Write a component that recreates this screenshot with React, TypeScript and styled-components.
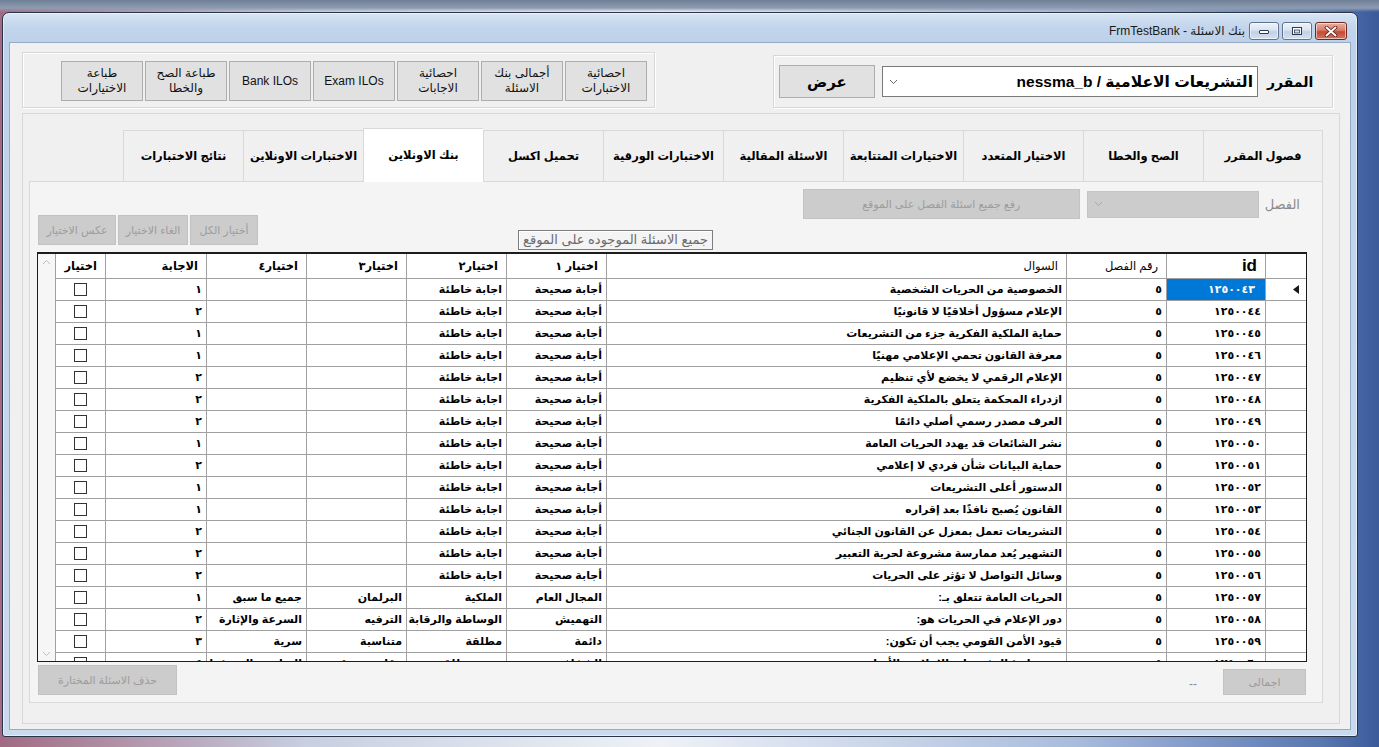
import React from "react";
import styled, { createGlobalStyle } from "styled-components";

const GlobalStyle = createGlobalStyle`
  html, body { margin: 0; padding: 0; }
  body {
    width: 1379px; height: 747px; overflow: hidden;
    font-family: "Liberation Sans", "DejaVu Sans", sans-serif;
    color: #000;
  }
  #root { width: 1379px; height: 747px; }
`;

const FONT = `"Liberation Sans", "DejaVu Sans", sans-serif`;

const Desktop = styled.div`
  width: 1379px;
  height: 747px;
  box-sizing: border-box;
  padding: 12px 21px 10px 2px;
  display: flex;
  background:
    linear-gradient(180deg, #6f7f96 0px, #8e9cb1 8px, rgba(0,0,0,0) 12px),
    linear-gradient(90deg, #a26a84 0%, #c7cfe0 22%, #eef1f7 48%, #a9bcdc 78%, #5876b0 96%, #3a5a9a 100%);
`;

const Window = styled.div`
  flex: 1;
  display: flex;
  flex-direction: column;
  border: 1px solid #2b3444;
  border-radius: 7px 7px 3px 3px;
  padding: 0 6px 6px 6px;
  background: linear-gradient(180deg, #d8e5f4 0px, #c2d5ec 14px, #bdd1ea 30px, #c9daee 100%);
  box-shadow: inset 0 0 0 1px rgba(255, 255, 255, 0.55);
`;

const TitleBar = styled.div`
  height: 29px;
  box-sizing: border-box;
  display: flex;
  justify-content: flex-end;
  align-items: flex-start;
  padding: 9px 4px 0 0;
  flex-shrink: 0;
`;

const TitleText = styled.div`
  font: 12px ${FONT};
  color: #1a1a1a;
  line-height: 18px;
  margin-right: 4px;
  white-space: nowrap;
`;

const CaptionGroup = styled.div`
  display: flex;
  gap: 3px;
`;

const CaptionBtn = styled.div<{ $close?: boolean }>`
  width: ${(p) => (p.$close ? 32 : 30)}px;
  height: 18px;
  box-sizing: border-box;
  border: 1px solid ${(p) => (p.$close ? "#6e2a22" : "#61748f")};
  border-radius: 3px;
  display: flex;
  align-items: center;
  justify-content: center;
  background: ${(p) =>
    p.$close
      ? "linear-gradient(180deg, #eab0a2 0%, #d97c68 45%, #c44a36 55%, #d3745d 100%)"
      : "linear-gradient(180deg, #eef3fa 0%, #d8e3f0 45%, #c1d1e6 55%, #d3e0f0 100%)"};
  box-shadow: inset 0 0 0 1px rgba(255, 255, 255, 0.55);
`;

const Client = styled.div`
  flex: 1;
  min-height: 0;
  display: flex;
  flex-direction: column;
  gap: 5px;
  background: #f0f0f0;
  border: 1px solid #98abc4;
  padding: 9px 10px 5px 12px;
`;

const TopRow = styled.div`
  height: 56px;
  flex-shrink: 0;
  display: flex;
  justify-content: space-between;
  align-items: flex-start;
  padding-right: 7px;
`;

const GroupBox = styled.div`
  box-sizing: border-box;
  border: 1px solid #d8d8d8;
  box-shadow: inset 1px 1px 0 #fff, 1px 1px 0 #fff;
`;

const ToolGroup = styled(GroupBox)`
  width: 633px;
  height: 56px;
  display: flex;
  justify-content: flex-end;
  gap: 2px;
  padding: 8px 7px 0 0;
`;

const CourseGroup = styled(GroupBox)`
  width: 560px;
  height: 53px;
  margin-top: 3px;
  display: flex;
  align-items: center;
  padding-left: 5px;
`;

const ToolButton = styled.div`
  width: 82px;
  height: 40px;
  box-sizing: border-box;
  background: #e1e1e1;
  border: 1px solid #adadad;
  display: flex;
  align-items: center;
  justify-content: center;
  text-align: center;
  font: 12px/15px ${FONT};
  color: #111;
`;

const ViewButton = styled.div`
  width: 96px;
  height: 33px;
  box-sizing: border-box;
  background: #e1e1e1;
  border: 1px solid #adadad;
  display: flex;
  align-items: center;
  justify-content: center;
  font: bold 15px ${FONT};
  margin-right: 7px;
`;

const ComboBox = styled.div<{ $disabled?: boolean }>`
  box-sizing: border-box;
  display: flex;
  align-items: center;
  justify-content: space-between;
  background: ${(p) => (p.$disabled ? "#cccccc" : "#fff")};
  border: 1px solid ${(p) => (p.$disabled ? "#c4c4c4" : "#7a7a7a")};
  padding: 0 4px 0 6px;
`;

const CourseCombo = styled(ComboBox)`
  width: 376px;
  height: 31px;
`;

const ComboText = styled.div`
  font: bold 15.5px ${FONT};
  white-space: nowrap;
  color: #000;
`;

const FieldLabel = styled.div<{ $muted?: boolean }>`
  font: ${(p) => (p.$muted ? "13px" : "bold 14px")} ${FONT};
  color: ${(p) => (p.$muted ? "#8a8a8a" : "#000")};
  white-space: nowrap;
  direction: rtl;
`;

const CourseLabel = styled(FieldLabel)`
  margin-left: 9px;
`;

const TabPanel = styled.div`
  flex: 1;
  min-height: 0;
  display: flex;
  flex-direction: column;
  border: 1px solid #d8d8d8;
  padding: 14px 16px 20px 6px;
`;

const TabStrip = styled.div`
  height: 53px;
  flex-shrink: 0;
  display: flex;
  direction: rtl;
  align-items: flex-end;
`;

const Tab = styled.div<{ $active?: boolean }>`
  width: 120px;
  height: ${(p) => (p.$active ? 54 : 51)}px;
  margin-bottom: ${(p) => (p.$active ? -1 : 0)}px;
  box-sizing: border-box;
  position: relative;
  z-index: ${(p) => (p.$active ? 2 : 1)};
  background: ${(p) => (p.$active ? "#ffffff" : "#f0f0f0")};
  border-top: 1px solid #d9d9d9;
  border-left: 1px solid #d9d9d9;
  &:first-child { border-right: 1px solid #d9d9d9; }
  display: flex;
  align-items: center;
  justify-content: center;
  font: bold 11.5px ${FONT};
  white-space: nowrap;
  padding-bottom: ${(p) => (p.$active ? 2 : 0)}px;
`;

const TabPage = styled.div`
  flex: 1;
  min-height: 0;
  display: flex;
  flex-direction: column;
  border: 1px solid #d9d9d9;
  background: #f4f4f4;
`;

const ControlsArea = styled.div`
  height: 70px;
  flex-shrink: 0;
  display: flex;
  align-items: flex-start;
  padding: 0 22px 0 8px;
`;

const SelectButtons = styled.div`
  display: flex;
  gap: 2px;
  align-self: flex-end;
  margin-bottom: 7px;
`;

const DisabledButton = styled.div<{ $w: number; $h?: number }>`
  width: ${(p) => p.$w}px;
  height: ${(p) => p.$h ?? 30}px;
  box-sizing: border-box;
  background: #cccccc;
  border: 1px solid #c2c2c2;
  color: #9c9c9c;
  font: 11px ${FONT};
  display: flex;
  align-items: center;
  justify-content: center;
  white-space: nowrap;
  direction: rtl;
`;

const Caption = styled.div`
  align-self: flex-end;
  margin: 0 0 2px 260px;
  height: 20px;
  box-sizing: border-box;
  border: 1px solid #7d7d7d;
  box-shadow: inset 1px 1px 0 #fff;
  padding: 0 4px;
  font: 13px/18px ${FONT};
  color: #6b6b6b;
  white-space: nowrap;
  direction: rtl;
`;

const ChapterControls = styled.div`
  margin: 7px 0 0 auto;
  display: flex;
  align-items: center;
`;

const ChapterCombo = styled(ComboBox)`
  width: 172px;
  height: 27px;
  margin: 0 6px 0 7px;
`;

const Grid = styled.div`
  height: 410px;
  flex-shrink: 0;
  box-sizing: border-box;
  margin: 0 15px 0 7px;
  border: 1px solid #1c1c1c;
  border-top: 2px solid #1c1c1c;
  background: #fff;
  display: flex;
  overflow: hidden;
`;

const ScrollBar = styled.div`
  width: 17px;
  flex-shrink: 0;
  background: #f6f6f6;
  display: flex;
  flex-direction: column;
  justify-content: space-between;
  align-items: center;
  padding: 5px 0 4px;
  box-sizing: border-box;
`;

const Table = styled.div`
  flex: 1;
  display: grid;
  grid-template-columns: 50px 101px 100px 100px 100px 100px 460px 100px 99px 41px;
  grid-template-rows: 25px;
  grid-auto-rows: 22px;
  align-content: start;
  overflow: hidden;
`;

const HeadCell = styled.div<{ $weight?: string; $size?: number }>`
  box-sizing: border-box;
  border-left: 1px solid #a0a0a0;
  border-bottom: 1px solid #a0a0a0;
  padding: 0 8px;
  direction: rtl;
  text-align: right;
  white-space: nowrap;
  overflow: hidden;
  font: ${(p) => p.$weight ?? "bold"} ${(p) => p.$size ?? 11.5}px/24px ${FONT};
`;

const Cell = styled.div<{ $sel?: boolean; $center?: boolean }>`
  box-sizing: border-box;
  border-left: 1px solid #a0a0a0;
  border-bottom: 1px solid #a0a0a0;
  padding: 0 ${(p) => (p.$sel ? 10 : 4)}px;
  direction: rtl;
  text-align: ${(p) => (p.$center ? "center" : "right")};
  white-space: nowrap;
  overflow: hidden;
  font: bold 11px/21px ${FONT};
  background: ${(p) => (p.$sel ? "#0078d7" : "#fff")};
  color: ${(p) => (p.$sel ? "#fff" : "#000")};
  display: ${(p) => (p.$center ? "flex" : "block")};
  align-items: center;
  justify-content: center;
`;

const RowHeadCell = styled.div`
  box-sizing: border-box;
  border-left: 1px solid #a0a0a0;
  border-bottom: 1px solid #a0a0a0;
  display: flex;
  align-items: center;
  justify-content: flex-end;
  padding-right: 7px;
`;

const CheckBox = styled.div`
  width: 13px;
  height: 13px;
  box-sizing: border-box;
  border: 1px solid #333;
  background: #fff;
`;

const BottomRow = styled.div`
  flex: 1;
  display: flex;
  align-items: flex-start;
  padding: 0 16px 0 8px;
`;

const DeleteWrap = styled.div`
  margin-top: 3px;
`;

const TotalGroup = styled.div`
  margin: 7px 0 0 auto;
  display: flex;
  align-items: center;
  gap: 26px;
`;

const Dashes = styled.div`
  font: 12px ${FONT};
  color: #8a8a8a;
  padding-top: 4px;
`;

const Chevron = ({ color, up }: { color: string; up?: boolean }) => (
  <svg width="9" height="6" viewBox="0 0 9 6">
    <polyline
      points={up ? "1,5 4.5,1.5 8,5" : "1,1 4.5,4.5 8,1"}
      fill="none"
      stroke={color}
      strokeWidth="1"
    />
  </svg>
);

const RowMarker = () => (
  <svg width="6" height="9" viewBox="0 0 6 9">
    <polygon points="6,0 6,9 0,4.5" fill="#1a1a1a" />
  </svg>
);

type Row = { id: string; q: string; o: [string, string, string, string]; a: string };

const T = "أجابة صحيحة";
const F = "اجابة خاطئة";

const ROWS: Row[] = [
  { id: "١٢٥٠٠٤٣", q: "الخصوصية من الحريات الشخصية", o: [T, F, "", ""], a: "١" },
  { id: "١٢٥٠٠٤٤", q: "الإعلام مسؤول أخلاقيًا لا قانونيًا", o: [T, F, "", ""], a: "٢" },
  { id: "١٢٥٠٠٤٥", q: "حماية الملكية الفكرية جزء من التشريعات", o: [T, F, "", ""], a: "١" },
  { id: "١٢٥٠٠٤٦", q: "معرفة القانون تحمي الإعلامي مهنيًا", o: [T, F, "", ""], a: "١" },
  { id: "١٢٥٠٠٤٧", q: "الإعلام الرقمي لا يخضع لأي تنظيم", o: [T, F, "", ""], a: "٢" },
  { id: "١٢٥٠٠٤٨", q: "ازدراء المحكمة يتعلق بالملكية الفكرية", o: [T, F, "", ""], a: "٢" },
  { id: "١٢٥٠٠٤٩", q: "العرف مصدر رسمي أصلي دائمًا", o: [T, F, "", ""], a: "٢" },
  { id: "١٢٥٠٠٥٠", q: "نشر الشائعات قد يهدد الحريات العامة", o: [T, F, "", ""], a: "١" },
  { id: "١٢٥٠٠٥١", q: "حماية البيانات شأن فردي لا إعلامي", o: [T, F, "", ""], a: "٢" },
  { id: "١٢٥٠٠٥٢", q: "الدستور أعلى التشريعات", o: [T, F, "", ""], a: "١" },
  { id: "١٢٥٠٠٥٣", q: "القانون يُصبح نافذًا بعد إقراره", o: [T, F, "", ""], a: "١" },
  { id: "١٢٥٠٠٥٤", q: "التشريعات تعمل بمعزل عن القانون الجنائي", o: [T, F, "", ""], a: "٢" },
  { id: "١٢٥٠٠٥٥", q: "التشهير يُعد ممارسة مشروعة لحرية التعبير", o: [T, F, "", ""], a: "٢" },
  { id: "١٢٥٠٠٥٦", q: "وسائل التواصل لا تؤثر على الحريات", o: [T, F, "", ""], a: "٢" },
  { id: "١٢٥٠٠٥٧", q: "الحريات العامة تتعلق بـ:", o: ["المجال العام", "الملكية", "البرلمان", "جميع ما سبق"], a: "١" },
  { id: "١٢٥٠٠٥٨", q: "دور الإعلام في الحريات هو:", o: ["التهميش", "الوساطة والرقابة", "الترفيه", "السرعة والإثارة"], a: "٢" },
  { id: "١٢٥٠٠٥٩", q: "قيود الأمن القومي يجب أن تكون:", o: ["دائمة", "مطلقة", "متناسبة", "سرية"], a: "٣" },
  { id: "١٢٥٠٠٦٠", q: "من مبادئ التشريعات الإعلامية الأساسية:", o: ["الشفافية", "حرية مطلقة", "رقابة مسبقة", "التوازن والمسؤولية"], a: "٤" },
];

const TOOL_BUTTONS: React.ReactNode[] = [
  <>طباعة<br />الاختيارات</>,
  <>طباعة الصح<br />والخطا</>,
  <>Bank ILOs</>,
  <>Exam ILOs</>,
  <>احصائية<br />الاجابات</>,
  <>أجمالى بنك<br />الاسئلة</>,
  <>احصائية<br />الاختبارات</>,
];

const TABS = [
  "فصول المقرر",
  "الصح والخطا",
  "الاختيار المتعدد",
  "الاختيارات المتتابعة",
  "الاسئلة المقالية",
  "الاختبارات الورقية",
  "تحميل اكسل",
  "بنك الاونلاين",
  "الاختبارات الاونلاين",
  "نتائج الاختبارات",
];

export default function App() {
  return (
    <>
      <GlobalStyle />
      <Desktop>
        <Window>
          <TitleBar>
            <TitleText>FrmTestBank - بنك الاسئلة</TitleText>
            <CaptionGroup>
              <CaptionBtn>
                <svg width="12" height="8" viewBox="0 0 12 8">
                  <rect x="1.5" y="3.5" width="9" height="3" rx="0.5" fill="#fff" stroke="#2d3b52" strokeWidth="1" />
                </svg>
              </CaptionBtn>
              <CaptionBtn>
                <svg width="12" height="10" viewBox="0 0 12 10">
                  <rect x="1.5" y="1.5" width="9" height="7" fill="#fff" stroke="#2d3b52" strokeWidth="1" />
                  <rect x="3.5" y="4" width="5" height="3" fill="#d5e1ef" stroke="#2d3b52" strokeWidth="0.8" />
                </svg>
              </CaptionBtn>
              <CaptionBtn $close>
                <svg width="14" height="11" viewBox="0 0 14 11">
                  <path d="M2.5 1.5 L11.5 9.5 M11.5 1.5 L2.5 9.5" stroke="#5a1a12" strokeWidth="3.6" strokeLinecap="round" />
                  <path d="M2.5 1.5 L11.5 9.5 M11.5 1.5 L2.5 9.5" stroke="#fff" strokeWidth="2" strokeLinecap="round" />
                </svg>
              </CaptionBtn>
            </CaptionGroup>
          </TitleBar>

          <Client>
            <TopRow>
              <ToolGroup>
                {TOOL_BUTTONS.map((b, i) => (
                  <ToolButton key={i}>{b}</ToolButton>
                ))}
              </ToolGroup>
              <CourseGroup>
                <ViewButton>عرض</ViewButton>
                <CourseCombo>
                  <Chevron color="#666" />
                  <ComboText>nessma_b / التشريعات الاعلامية</ComboText>
                </CourseCombo>
                <CourseLabel>المقرر</CourseLabel>
              </CourseGroup>
            </TopRow>

            <TabPanel>
              <TabStrip>
                {TABS.map((t, i) => (
                  <Tab key={t} $active={i === 7}>{t}</Tab>
                ))}
              </TabStrip>
              <TabPage>
                <ControlsArea>
                  <SelectButtons>
                    <DisabledButton $w={78}>عكس الاختيار</DisabledButton>
                    <DisabledButton $w={70}>الغاء الاختيار</DisabledButton>
                    <DisabledButton $w={68}>أختيار الكل</DisabledButton>
                  </SelectButtons>
                  <Caption>جميع الاسئلة الموجوده على الموقع</Caption>
                  <ChapterControls>
                    <DisabledButton $w={277}>رفع جميع اسئلة الفصل على الموقع</DisabledButton>
                    <ChapterCombo $disabled>
                      <Chevron color="#a8a8a8" />
                      <span />
                    </ChapterCombo>
                    <FieldLabel $muted>الفصل</FieldLabel>
                  </ChapterControls>
                </ControlsArea>

                <Grid>
                  <ScrollBar>
                    <Chevron color="#bdbdbd" up />
                    <Chevron color="#bdbdbd" />
                  </ScrollBar>
                  <Table>
                    <HeadCell>اختيار</HeadCell>
                    <HeadCell>الاجابة</HeadCell>
                    <HeadCell>اختيار٤</HeadCell>
                    <HeadCell>اختيار٣</HeadCell>
                    <HeadCell>اختيار٢</HeadCell>
                    <HeadCell>اختيار ١</HeadCell>
                    <HeadCell $weight="normal">السوال</HeadCell>
                    <HeadCell $weight="normal">رقم الفصل</HeadCell>
                    <HeadCell $size={17}>id</HeadCell>
                    <HeadCell />
                    {ROWS.map((r, i) => (
                      <React.Fragment key={r.id}>
                        <Cell $center>
                          <CheckBox />
                        </Cell>
                        <Cell>{r.a}</Cell>
                        <Cell>{r.o[3]}</Cell>
                        <Cell>{r.o[2]}</Cell>
                        <Cell>{r.o[1]}</Cell>
                        <Cell>{r.o[0]}</Cell>
                        <Cell>{r.q}</Cell>
                        <Cell>٥</Cell>
                        <Cell $sel={i === 0}>{r.id}</Cell>
                        <RowHeadCell>{i === 0 ? <RowMarker /> : null}</RowHeadCell>
                      </React.Fragment>
                    ))}
                  </Table>
                </Grid>

                <BottomRow>
                  <DeleteWrap>
                    <DisabledButton $w={139}>حذف الاسئلة المختارة</DisabledButton>
                  </DeleteWrap>
                  <TotalGroup>
                    <Dashes>--</Dashes>
                    <DisabledButton $w={83} $h={26}>اجمالى</DisabledButton>
                  </TotalGroup>
                </BottomRow>
              </TabPage>
            </TabPanel>
          </Client>
        </Window>
      </Desktop>
    </>
  );
}
